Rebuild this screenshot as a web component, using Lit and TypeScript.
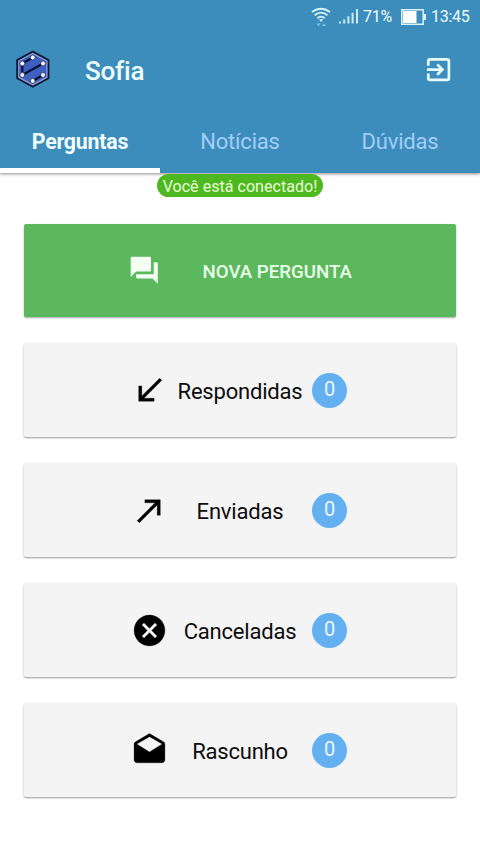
import { LitElement, html, css, svg } from "lit";
import { customElement, property } from "lit/decorators.js";

const ICONS: Record<string, string> = {
  received: "M20 5.41L18.59 4 7 15.59V9H5v10h10v-2H8.41z",
  made: "M9 5v2h6.59L4 18.59 5.41 20 17 8.41V15h2V5z",
  cancel: "M12 2C6.47 2 2 6.47 2 12s4.47 10 10 10 10-4.47 10-10S17.53 2 12 2zm5 13.59L15.59 17 12 13.41 8.41 17 7 15.59 10.59 12 7 8.41 8.41 7 12 10.59 15.59 7 17 8.41 13.41 12 17 15.59z",
  drafts: "M21.99 8c0-.72-.37-1.35-.94-1.7L12 1 2.95 6.3C2.38 6.65 2 7.28 2 8v10c0 1.1.9 2 2 2h16c1.1 0 2-.9 2-2l-.01-10zM12 13L3.74 7.84 12 3l8.26 4.84L12 13z",
  forum: "M21 6h-2v9H6v2c0 .55.45 1 1 1h11l4 4V7c0-.55-.45-1-1-1zm-4 6V3c0-.55-.45-1-1-1H3c-.55 0-1 .45-1 1v14l4-4h10c.55 0 1-.45 1-1z",
};

@customElement("status-bar")
class StatusBar extends LitElement {
  static styles = css`
    :host { display: flex; height: 33px; align-items: center; justify-content: flex-end; padding-right: 11px; color: #eefcff; font-size: 16px; }
    svg { display: block; flex: none; }
    .wifi { margin-right: 8px; }
    .signal { margin-right: 4px; }
    .percent { width: 29px; letter-spacing: -0.3px; margin-right: 9px; }
    .battery { margin-right: 5px; }
    .clock { width: 38px; letter-spacing: -0.25px; white-space: nowrap; }
  `;
  render() {
    return html`
      <svg class="wifi" width="20" height="20" viewBox="0 0 20 20" fill="none" stroke="#d9f6fb" stroke-width="1.8">
        <path d="M1 5Q10-1.5 19 5M3.6 8.2Q10 3 16.4 8.2M6.3 11.2Q10 8 13.7 11.2" />
        <path d="M7.8 12.2h4.4L10 15z" fill="#d9f6fb" stroke="none" />
        <path d="M5.5 16.5h4l-2 2.5zM11 19h4l-2-2.5z" fill="#86c7e4" stroke="none" />
      </svg>
      <svg class="signal" width="20" height="17" viewBox="0 0 20 17" fill="#cdeaf4">
        <path d="M0 13.5h2v2H0zM4.2 11.5h2v4h-2zM8.4 8.2h2v7.3h-2zM12.6 4.7h2v10.8h-2zM17 1h2v14.5h-2z" />
      </svg>
      <span class="percent">71%</span>
      <svg class="battery" width="25" height="16" viewBox="0 0 25 16">
        <path d="M.8.8h21.4v14.4H.8z" fill="none" stroke="#d9f4fa" stroke-width="1.5" />
        <path d="M2 2h13.5v12H2z" fill="#fff" />
        <path d="M23 5h2v6h-2z" fill="#d9f4fa" />
      </svg>
      <span class="clock">13:45</span>`;
  }
}

@customElement("app-header")
class AppHeader extends LitElement {
  static styles = css`
    :host { display: block; height: 173px; background: #3c8dbc; box-shadow: 0 1px 3px rgba(0, 0, 0, 0.45); }
    .bar { display: flex; align-items: center; height: 75px; padding: 0 29px 0 15px; }
    .logo { margin-bottom: 3px; }
    .exit { margin-bottom: 2px; }
    .title { flex: 1; margin-left: 34px; font-size: 26px; line-height: 30px; font-weight: 500; color: #eefcff; letter-spacing: -0.2px; }
    svg { display: block; flex: none; }
    .tabs { display: grid; grid-template-columns: repeat(3, 1fr); height: 65px; }
    .tab { display: flex; justify-content: center; padding-top: 21px; box-sizing: border-box; font-size: 22px; line-height: 26px; letter-spacing: -0.2px; color: #a2cdf8; border-bottom: 5px solid transparent; }
    .active { color: #f1fdff; font-weight: 700; font-size: 21.3px; border-bottom-color: #fff; }
  `;
  render() {
    const nodes = [[17.7, 7.5], [7.3, 13.5], [28, 13.5], [7.3, 25], [28, 25], [17.7, 31]];
    return html`
      <status-bar></status-bar>
      <div class="bar">
        <svg class="logo" width="36" height="38" viewBox="0 0 36 38">
          <path d="M17.8 1.5L33.5 10v18.3L17.8 36.8 2.1 28.3V10z" fill="#3d5fc0" stroke="#10142d" stroke-width="1.7" stroke-linejoin="round" />
          <path d="M17.8 3.5L31.8 11v16.3L17.8 34.8 3.8 27.3V11z" fill="none" stroke="#8ea4ce" stroke-width="1.1" />
          <path d="M7.3 25V13.5L17.7 7.5M7.3 25L28 13.5M28 25l-10.3 6" fill="none" stroke="#0a1033" stroke-width="2.2" />
          ${nodes.map(([x, y]) => svg`<circle cx=${x} cy=${y} r="2.4" fill="#fff" stroke="#18224c" stroke-width=".7" />`)}
        </svg>
        <span class="title">Sofia</span>
        <svg class="exit" width="26" height="26" viewBox="0 0 26 26" fill="none" stroke="#e6fcff" stroke-width="2.7">
          <path d="M3.3 8.8V4q0-1.7 1.7-1.7h17.2q1.7 0 1.7 1.7v17.2q0 1.7-1.7 1.7H5q-1.7 0-1.7-1.7v-4.8" />
          <path d="M2 12.6h14.5M12.2 7.4l5.2 5.2-5.2 5.2" />
        </svg>
      </div>
      <nav class="tabs">
        <span class="tab active">Perguntas</span>
        <span class="tab">Notícias</span>
        <span class="tab">Dúvidas</span>
      </nav>`;
  }
}

@customElement("menu-card")
class MenuCard extends LitElement {
  @property() icon = "";
  @property() label = "";
  @property({ type: Number }) count = 0;
  static styles = css`
    :host { display: grid; grid-template-columns: 37px 144px 36px; align-items: center; height: 94px; box-sizing: border-box; padding-left: 107px; background: #f4f4f4; border-radius: 2px; box-shadow: 0 1px 2px rgba(0, 0, 0, 0.4); }
    svg { display: block; width: 37px; height: 37px; }
    .label { text-align: center; font-size: 22px; line-height: 26px; letter-spacing: -0.2px; color: #0c0c0c; padding-top: 4px; }
    .badge { width: 35px; height: 35px; margin-top: 1px; border-radius: 50%; background: #64aff0; color: #e9f8ff; font-size: 20px; line-height: 33px; text-align: center; }
  `;
  render() {
    return html`
      <svg viewBox="0 0 24 24"><path d=${ICONS[this.icon]} stroke="#000" stroke-width=".2" /></svg>
      <span class="label">${this.label}</span>
      <span class="badge">${this.count}</span>`;
  }
}

@customElement("app-root")
class AppRoot extends LitElement {
  static styles = css`
    :host { display: block; height: 853px; overflow: hidden; background: #fff; font-family: Roboto, "Liberation Sans", sans-serif; }
    .toast { position: relative; display: block; width: 166px; height: 23px; margin: 1px auto 0; border-radius: 12px; background: #4db81f; color: #e9ffd8; font-size: 16.1px; line-height: 25px; text-align: center; white-space: nowrap; }
    main { display: flex; flex-direction: column; gap: 26px; padding: 27px 24px 0; }
    .primary { display: flex; align-items: center; height: 93px; box-sizing: border-box; padding-left: 104px; background: #5cb85c; border-radius: 2px; color: #e9ffe9; box-shadow: 0 1px 2px rgba(0, 0, 0, 0.35); font-size: 18.7px; font-weight: 500; }
    .primary svg { display: block; width: 32.5px; height: 32.5px; fill: #f4fff4; margin-right: 42px; }
    .primary span { padding-top: 2px; }
  `;
  render() {
    return html`
      <app-header></app-header>
      <span class="toast">Você está conectado!</span>
      <main>
        <div class="primary">
          <svg viewBox="0 0 24 24"><path d=${ICONS.forum} /></svg>
          <span>NOVA PERGUNTA</span>
        </div>
        <menu-card icon="received" label="Respondidas"></menu-card>
        <menu-card icon="made" label="Enviadas"></menu-card>
        <menu-card icon="cancel" label="Canceladas"></menu-card>
        <menu-card icon="drafts" label="Rascunho"></menu-card>
      </main>`;
  }
}
